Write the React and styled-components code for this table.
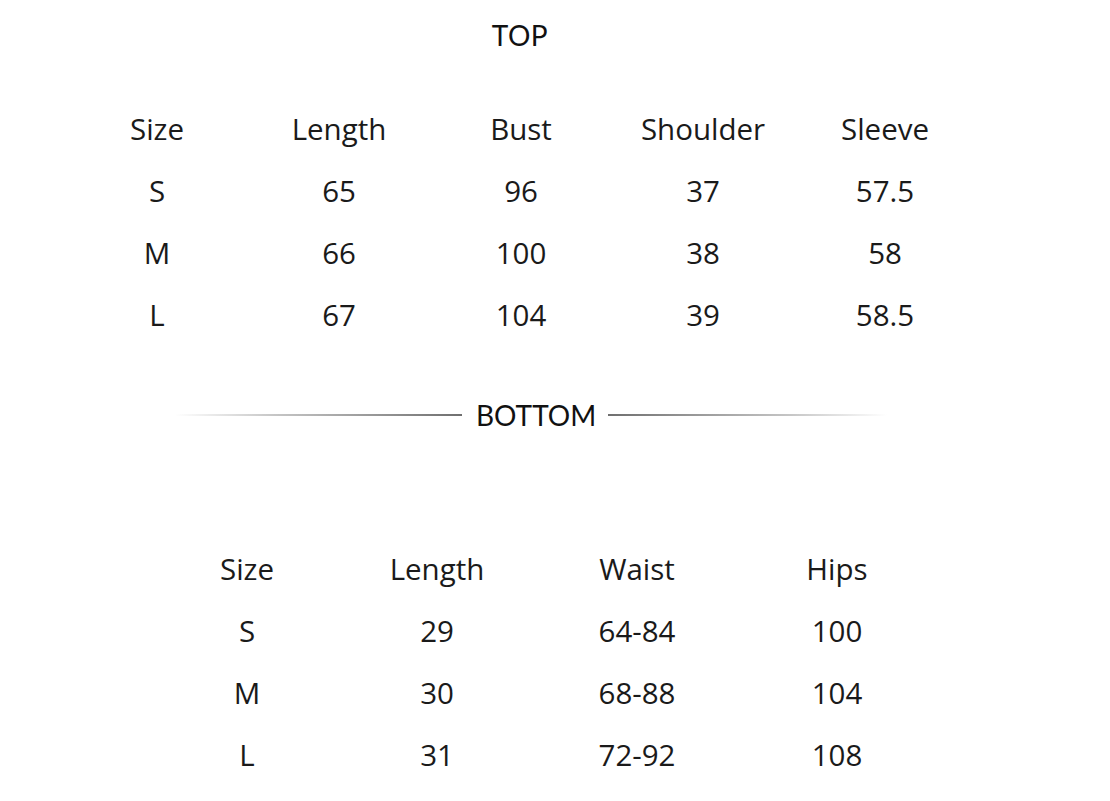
import React from 'react';
import styled, { createGlobalStyle } from 'styled-components';

const GlobalStyle = createGlobalStyle`
  html, body {
    margin: 0;
    padding: 0;
    background: #ffffff;
  }
`;

const topRows = [
  ['Size', 'Length', 'Bust', 'Shoulder', 'Sleeve'],
  ['S', '65', '96', '37', '57.5'],
  ['M', '66', '100', '38', '58'],
  ['L', '67', '104', '39', '58.5'],
];

const bottomRows = [
  ['Size', 'Length', 'Waist', 'Hips'],
  ['S', '29', '64-84', '100'],
  ['M', '30', '68-88', '104'],
  ['L', '31', '72-92', '108'],
];

const Page = styled.div`
  width: 1110px;
  height: 801px;
  overflow: hidden;
  display: flex;
  flex-direction: column;
  background: #fff;
  color: #161616;
`;

const Title = styled.h2`
  margin: 15px 0 0 0;
  height: 40px;
  line-height: 40px;
  text-align: center;
  width: 1040px;
  font-family: Lato, "Noto Sans", sans-serif;
  font-weight: 400;
  font-size: 28px;
  letter-spacing: 0.5px;
  color: #111;
`;

const Table = styled.div`
  display: grid;
  grid-template-columns: ${(p) => p.cols};
  grid-auto-rows: 62px;
  margin-left: ${(p) => p.left}px;
  margin-top: ${(p) => p.top}px;
`;

const Cell = styled.div`
  display: flex;
  align-items: center;
  justify-content: center;
  font-family: "Open Sans", "Noto Sans", sans-serif;
  font-size: 29.5px;
  font-weight: 400;
  color: #1a1a1a;
  white-space: nowrap;
`;

const Divider = styled.div`
  display: flex;
  align-items: center;
  height: 40px;
  margin: 50px 0 0 175px;
`;

const Line = styled.div`
  width: ${(p) => p.length}px;
  height: 2px;
  background: linear-gradient(
    ${(p) => (p.side === 'left' ? 'to right' : 'to left')},
    rgba(120, 120, 120, 0) 0%,
    rgba(150, 150, 150, 0.55) 35%,
    #6f6f6f 100%
  );
`;

const DividerLabel = styled.span`
  margin: 0 12px 0 14px;
  font-family: Lato, "Noto Sans", sans-serif;
  font-size: 28px;
  font-weight: 400;
  color: #111;
  line-height: 40px;
`;

const SizeTable = ({ rows, cols, left, top }) => (
  <Table cols={cols} left={left} top={top}>
    {rows.map((row, i) =>
      row.map((value, j) => <Cell key={`${i}-${j}`}>{value}</Cell>)
    )}
  </Table>
);

const App = () => (
  <Page>
    <GlobalStyle />
    <Title>TOP</Title>
    <SizeTable rows={topRows} cols="repeat(5, 182px)" left={66} top={42} />
    <Divider>
      <Line side="left" length={287} />
      <DividerLabel>BOTTOM</DividerLabel>
      <Line side="right" length={279} />
    </Divider>
    <SizeTable rows={bottomRows} cols="180px 200px 200px 200px" left={157} top={102} />
  </Page>
);

export default App;
